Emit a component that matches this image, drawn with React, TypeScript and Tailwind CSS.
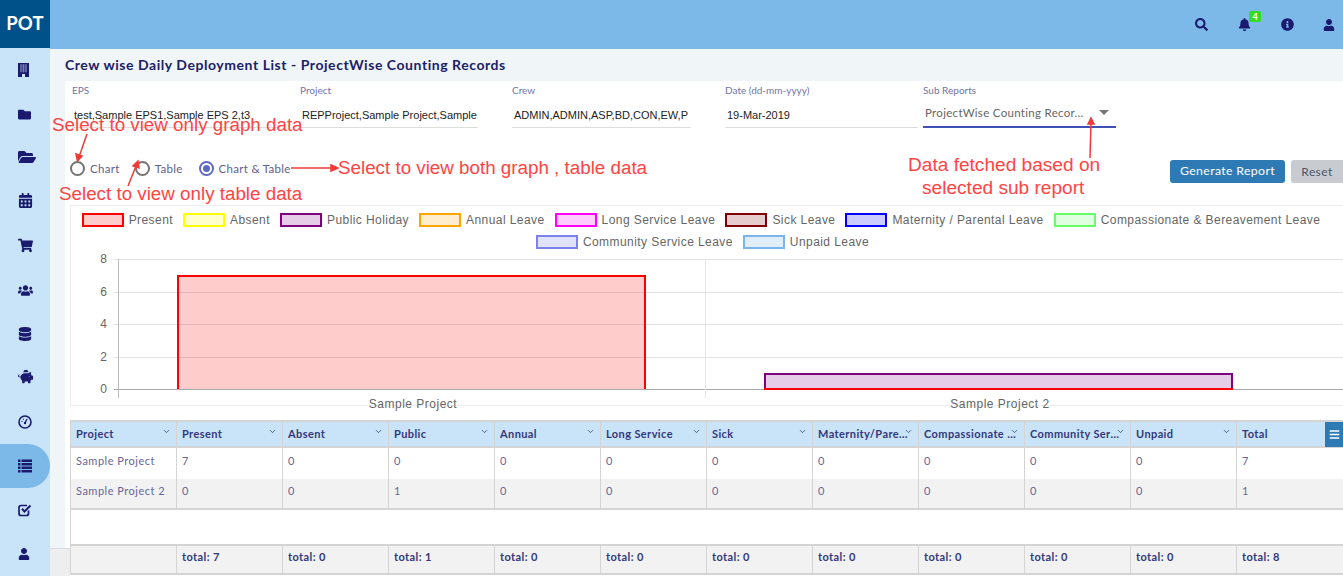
import {
  FaFolder, FaFolderOpen, FaCalendarAlt, FaShoppingCart, FaUsers, FaDatabase,
  FaPiggyBank, FaUser, FaSearch, FaBell, FaInfoCircle, FaBars,
} from 'react-icons/fa';
import { ChevronDown } from 'lucide-react';

function BuildingIcon() {
  return (
    <svg width="11" height="14" viewBox="0 0 11 14">
      <rect width="11" height="14" fill="#1a1a6e" />
      <path d="M2 2h7M2 4h7M2 6h7M2 8h7M3 1.5v8M5.5 1.5v8M8 1.5v8" stroke="#7f8fb8" strokeWidth="0.8" />
      <rect x="4" y="11" width="3" height="3" fill="#c9e4f9" />
    </svg>
  );
}

function GaugeIcon() {
  return (
    <svg width="14" height="14" viewBox="0 0 14 14" fill="none">
      <circle cx="7" cy="7" r="6" stroke="#1a1a6e" strokeWidth="1.6" />
      <path d="M7 8 L9 4" stroke="#1a1a6e" strokeWidth="1.3" />
      <circle cx="7" cy="8" r="1.2" fill="#1a1a6e" />
      <path d="M3.5 6.5h1M5.5 3.8v1" stroke="#1a1a6e" strokeWidth="1" />
    </svg>
  );
}

function CheckIcon() {
  return (
    <svg width="14" height="14" viewBox="0 0 14 14" fill="none">
      <path d="M10.5 7.5v3a2 2 0 0 1-2 2h-5.5a2 2 0 0 1-2-2v-6a2 2 0 0 1 2-2h6" stroke="#1a1a6e" strokeWidth="1.7" />
      <path d="M4 5.8l2.5 2.7l6-6" stroke="#1a1a6e" strokeWidth="2" />
    </svg>
  );
}

function ListIcon() {
  return (
    <svg width="14" height="14" viewBox="0 0 14 14" fill="#1a1a6e">
      {[0.5, 4, 7.5, 11].map((y) => (
        <g key={y}>
          <rect x="0" y={y} width="2.5" height="2.5" />
          <rect x="3.5" y={y} width="10.5" height="2.5" />
        </g>
      ))}
    </svg>
  );
}

const navIcons = [
  <BuildingIcon />,
  <FaFolder size={13} />,
  <FaFolderOpen size={18} className="mb-[2px]" />,
  <FaCalendarAlt size={15} className="mb-[3px]" />,
  <FaShoppingCart size={15} className="mb-[2px]" />,
  <FaUsers size={15} />,
  <FaDatabase size={14} />,
  <FaPiggyBank size={15} className="mb-[3px]" />,
  <GaugeIcon />,
  <ListIcon />,
  <CheckIcon />,
  <FaUser size={12} />,
];

const legendRows = [
  [
    { label: 'Present', border: 'border-[#ff0000]', bg: 'bg-[#ffcccc]' },
    { label: 'Absent', border: 'border-[#ffff00]', bg: 'bg-[#ffffcc]' },
    { label: 'Public Holiday', border: 'border-[#800080]', bg: 'bg-[#e6cce6]' },
    { label: 'Annual Leave', border: 'border-[#ffa500]', bg: 'bg-[#ffedcc]' },
    { label: 'Long Service Leave', border: 'border-[#ff00ff]', bg: 'bg-[#ffccff]' },
    { label: 'Sick Leave', border: 'border-[#800000]', bg: 'bg-[#e6cccc]' },
    { label: 'Maternity / Parental Leave', border: 'border-[#0000ff]', bg: 'bg-[#ccccff]' },
    { label: 'Compassionate & Bereavement Leave', border: 'border-[#66ff66]', bg: 'bg-[#e0ffe0]' },
  ],
  [
    { label: 'Community Service Leave', border: 'border-[#7b83eb]', bg: 'bg-[#e0e2fa]' },
    { label: 'Unpaid Leave', border: 'border-[#7cb5ec]', bg: 'bg-[#e0eefa]' },
  ],
];

const columns = [
  'Project', 'Present', 'Absent', 'Public', 'Annual', 'Long Service',
  'Sick', 'Maternity/Parental', 'Compassionate  Leave', 'Community Service', 'Unpaid', 'Total',
];

const rows = [
  ['Sample Project', '7', '0', '0', '0', '0', '0', '0', '0', '0', '0', '7'],
  ['Sample Project 2', '0', '0', '1', '0', '0', '0', '0', '0', '0', '0', '1'],
];

const totals = ['', 'total: 7', 'total: 0', 'total: 1', 'total: 0', 'total: 0', 'total: 0', 'total: 0', 'total: 0', 'total: 0', 'total: 0', 'total: 8'];

function Field({ label, value, width }: { label: string; value: string; width: string }) {
  return (
    <div className={`flex flex-col ${width}`}>
      <span className="text-[10px] leading-[12px] text-[#7373a8]">{label}</span>
      <div className="mt-[6px] h-[26px] border-b border-[#dddddd] pl-[2px] pt-[5px] overflow-hidden whitespace-nowrap font-['Liberation_Sans',sans-serif] text-[11px] leading-[16px] text-[#222222]">
        {value}
      </div>
    </div>
  );
}

function Radio({ label, checked, className }: { label: string; checked?: boolean; className: string }) {
  return (
    <label className={`flex items-center gap-[5px] ${className}`}>
      <span className={`flex h-[15px] w-[15px] items-center justify-center rounded-full border-2 ${checked ? 'border-[#5c6bc0]' : 'border-[#757575]'}`}>
        {checked && <span className="h-[7px] w-[7px] rounded-full bg-[#5c6bc0]" />}
      </span>
      <span className="text-[11.5px] tracking-[0.3px] text-[#61618f]">{label}</span>
    </label>
  );
}

function Chart() {
  const grid = [
    { v: '8', y: 54 },
    { v: '6', y: 87 },
    { v: '4', y: 119 },
    { v: '2', y: 152 },
    { v: '0', y: 184 },
  ];
  return (
    <svg width="1273" height="152" viewBox="0 48 1273 152" className="block overflow-visible">
      {grid.map((g) => (
        <g key={g.v}>
          <line x1="43" x2="1273" y1={g.y + 0.5} y2={g.y + 0.5} stroke={g.v === '0' ? '#aaaaaa' : '#e2e2e2'} />
          <text x="36" y={g.y + 4} textAnchor="end" fontFamily="Liberation Sans" fontSize="12" fill="#666666">{g.v}</text>
        </g>
      ))}
      <line x1="47.5" x2="47.5" y1="54" y2="193" stroke="#bbbbbb" />
      <line x1="634.5" x2="634.5" y1="54" y2="193" stroke="#e6e6e6" />
      <rect x="107" y="71" width="467" height="113" fill="#ff0000" fillOpacity="0.2" />
      <path d="M107 184V71H574V184" fill="none" stroke="#ff0000" strokeWidth="2" />
      <rect x="694" y="169" width="467" height="15" fill="#800080" fillOpacity="0.2" />
      <path d="M694 184V169H1161V184" fill="none" stroke="#800080" strokeWidth="2" />
      <line x1="693" x2="1162" y1="184" y2="184" stroke="#ff0000" strokeWidth="2" />
      <text x="342" y="203" textAnchor="middle" fontFamily="Liberation Sans" fontSize="12" letterSpacing="0.5" fill="#666666">Sample Project</text>
      <text x="929" y="203" textAnchor="middle" fontFamily="Liberation Sans" fontSize="12" letterSpacing="0.5" fill="#666666">Sample Project 2</text>
    </svg>
  );
}

function ReportTable() {
  return (
    <div className="relative ml-[5px] mt-[14px] border-l border-t-2 border-[#d4d4d4] font-['Lato',sans-serif]">
      <div className="grid h-[26px] grid-cols-[repeat(12,106px)] border-b-2 border-[#d4d4d4] bg-[#c9e4f9]">
        {columns.map((c) => (
          <div key={c} className="relative flex items-center border-r border-[#d4d4d4] pl-[5px] pr-[6px] text-[11px] font-bold tracking-[0.4px] text-[#34387c]">
            <span className="min-w-0 flex-1 truncate whitespace-pre">{c}</span>
            <ChevronDown size={9} className="absolute right-[5px] top-[5px] text-[#34387c]" />
          </div>
        ))}
      </div>
      <button className="absolute right-0 top-0 flex h-[25px] w-[18px] items-center justify-center bg-[#2e7ab5] text-white">
        <FaBars size={11} />
      </button>
      {rows.map((row, i) => (
        <div key={row[0]} className={`grid grid-cols-[repeat(12,106px)] ${i === 0 ? 'h-[31px] bg-white' : 'h-[29px] bg-[#f2f2f2]'}`}>
          {row.map((cell, j) => (
            <div key={j} className={`pl-[5px] text-[11px] leading-[16px] tracking-[0.5px] text-[#66669a] ${i === 0 ? 'pt-[5px]' : 'pt-[4px]'} ${j < 11 ? 'border-r border-[#d4d4d4]' : ''}`}>
              {cell}
            </div>
          ))}
        </div>
      ))}
      <div className="h-[36px] border-t-2 border-[#d4d4d4] bg-white" />
      <div className="grid h-[31px] grid-cols-[repeat(12,106px)] border-y-2 border-[#d4d4d4] bg-[#f2f2f2]">
        {totals.map((t, j) => (
          <div key={j} className={`pl-[5px] pt-[3px] text-[11px] font-bold leading-[16px] tracking-[0.4px] text-[#34387c] ${j < 11 ? 'border-r border-[#d4d4d4]' : ''}`}>
            {t}
          </div>
        ))}
      </div>
    </div>
  );
}

function Annotations() {
  const note = "absolute whitespace-nowrap font-['Liberation_Sans',sans-serif] leading-[22px] text-[#ff4444]";
  return (
    <>
      <span className={`${note} left-[52px] top-[114px] text-[18.8px]`}>Select to view only graph data</span>
      <span className={`${note} left-[59px] top-[183px] text-[18.8px]`}>Select to view only table data</span>
      <span className={`${note} left-[338px] top-[157px] text-[18.8px]`}>Select to view both graph , table data</span>
      <span className={`${note} left-[908px] top-[154px] text-[19.1px]`}>Data fetched based on</span>
      <span className={`${note} left-[922px] top-[177px] text-[19.1px]`}>selected sub report</span>
      <svg width="1343" height="576" className="pointer-events-none absolute left-0 top-0">
        <g stroke="#f03a3a" strokeWidth="1.5" fill="#f03a3a">
          <line x1="87" y1="134" x2="79" y2="157" />
          <path d="M77.5 161 L76 154 L82 156 Z" />
          <line x1="128" y1="186" x2="136" y2="166" />
          <path d="M138 161 L139 168 L133 166 Z" />
          <line x1="291" y1="168" x2="333" y2="168" />
          <path d="M338 168 L331 165 L331 171 Z" />
          <line x1="1090" y1="158" x2="1091" y2="122" />
          <path d="M1091 118 L1088 124 L1094 124 Z" />
        </g>
      </svg>
    </>
  );
}

export default function App() {
  return (
    <div className="relative flex h-[576px] w-[1343px] overflow-hidden bg-[#f0f5f8] font-['Lato',sans-serif]">
      <aside className="flex h-full w-[50px] shrink-0 flex-col bg-[#c9e4f9]">
        <div className="flex h-[49px] items-center justify-center bg-[#00508a] text-[18.5px] font-bold tracking-[0.2px] text-white">POT</div>
        <nav className="flex flex-col">
          {navIcons.map((icon, i) => (
            <div
              key={i}
              className={`flex h-[44px] items-center pl-[18px] text-[#1a1a6e] ${i === 9 ? 'rounded-r-[22px] bg-[#7cb8e8]' : ''}`}
            >
              {icon}
            </div>
          ))}
        </nav>
      </aside>

      <div className="flex min-w-0 flex-1 flex-col">
        <header className="flex h-[49px] shrink-0 items-center justify-end bg-[#7cb8e8] pr-[8px] text-[#1a1a6e]">
          <FaSearch size={13} className="mr-[30px]" />
          <div className="relative mr-[30px]">
            <FaBell size={13} />
            <span className="absolute -right-[10px] -top-[7px] flex h-[11px] w-[12px] items-center justify-center rounded-[2px] bg-[#33dd22] text-[9px] font-bold leading-none text-white">4</span>
          </div>
          <FaInfoCircle size={13} className="mr-[29px]" />
          <FaUser size={12} />
        </header>

        <main className="flex min-h-0 flex-1 flex-col pl-[15px]">
          <h1 className="flex h-[32px] shrink-0 items-center pb-[2px] text-[14px] font-bold tracking-[0.55px] text-[#1c2068]">
            Crew wise Daily Deployment List - ProjectWise Counting Records
          </h1>
          <section className="min-h-0 flex-1 rounded-tl-[4px] bg-white">
            <div className="flex pl-[7px] pt-[3px]">
              <Field label="EPS" value="test,Sample EPS1,Sample EPS 2,t3" width="w-[206px] mr-[22px]" />
              <Field label="Project" value="REPProject,Sample Project,Sample" width="w-[178px] mr-[34px]" />
              <Field label="Crew" value="ADMIN,ADMIN,ASP,BD,CON,EW,P" width="w-[179px] mr-[34px]" />
              <Field label="Date (dd-mm-yyyy)" value="19-Mar-2019" width="w-[193px] mr-[5px]" />
              <div className="flex w-[193px] flex-col">
                <span className="text-[10px] leading-[12px] text-[#7373a8]">Sub Reports</span>
                <div className="mt-[6px] flex h-[26px] items-start border-b-2 border-[#3f51b5] pl-[2px] pt-[3px] text-[11.5px] tracking-[0.3px] text-[#666666]">
                  <span className="flex-1 leading-[16px]">ProjectWise Counting Recor...</span>
                  <span className="mr-[7px] mt-[5px] h-0 w-0 border-x-[5px] border-t-[5px] border-x-transparent border-t-[#757575]" />
                </div>
              </div>
            </div>

            <div className="flex h-[77px] items-start pl-[5px] pt-[25px]">
              <Radio label="Chart" className="mt-[7px] mr-[15px]" />
              <Radio label="Table" className="mt-[7px] mr-[16px]" />
              <Radio label="Chart & Table" checked className="mt-[7px]" />
              <div className="ml-auto flex gap-[6px] pt-[7px]">
                <button className="h-[23px] w-[115px] rounded-[3px] bg-[#2e7ab5] text-[12.3px] tracking-[0.35px] text-white">Generate Report</button>
                <button className="h-[23px] w-[52px] rounded-l-[3px] bg-[#c8ccd1] text-[12px] tracking-[0.4px] text-[#4a5568]">Reset</button>
              </div>
            </div>

            <div className="ml-[5px] border-y border-l border-[#eeeeee] pt-[3px]">
              {legendRows.map((legend, i) => (
                <div key={i} className={`flex h-[22px] items-center justify-center gap-[10px] ${i === 0 ? 'pr-[12px]' : 'pr-[9px]'}`}>
                  {legend.map((item) => (
                    <div key={item.label} className="flex items-center gap-[5px]">
                      <span className={`h-[14px] w-[42px] border-2 ${item.border} ${item.bg}`} />
                      <span className="font-['Liberation_Sans',sans-serif] text-[12px] tracking-[0.43px] text-[#666666]">{item.label}</span>
                    </div>
                  ))}
                </div>
              ))}
              <Chart />
            </div>

            <ReportTable />
          </section>
        </main>
      </div>

      <div className="absolute bottom-0 left-[50px] h-[28px] w-[20px] border-t border-[#d8dce2] bg-[#eeeeee]" />
      <Annotations />
    </div>
  );
}
